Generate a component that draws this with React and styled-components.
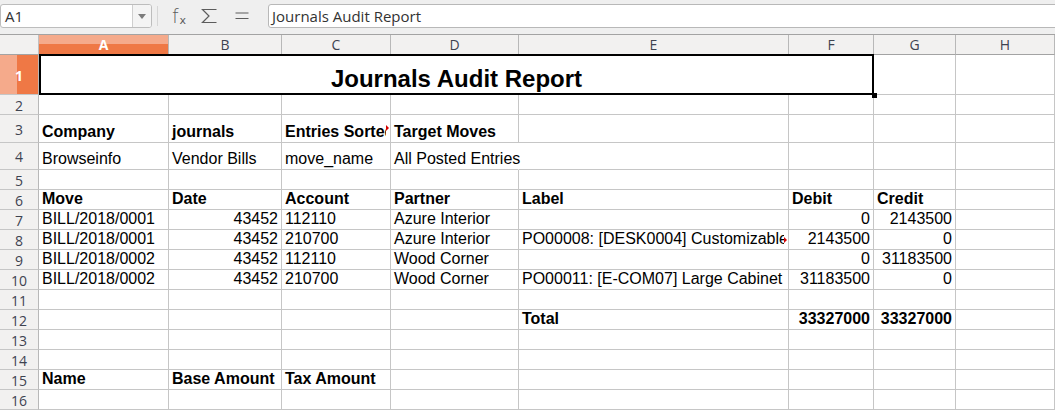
import React from 'react';
import styled, { createGlobalStyle } from 'styled-components';

const Global = createGlobalStyle`
  html, body { margin: 0; padding: 0; background: #ffffff; }
  body {
    width: 1055px; height: 411px; overflow: hidden;
    font-family: "Liberation Sans", Arial, sans-serif;
  }
`;

const COLS = [130, 113, 109, 128, 270, 85, 82, 99];
const LETTERS = ['A', 'B', 'C', 'D', 'E', 'F', 'G', 'H'];

const T = (v, o = {}) => ({ v, ...o });
const B = (v, o = {}) => ({ v, b: true, ...o });
const N = (v, o = {}) => ({ v, r: true, ...o });

const ROWS = [
  { h: 40, title: 'Journals Audit Report' },
  { h: 20, cells: [] },
  { h: 28, cells: [B('Company'), B('journals'), B('Entries Sorted By', { clip: true }), B('Target Moves')] },
  { h: 27, cells: [T('Browseinfo'), T('Vendor Bills'), T('move_name'), T('All Posted Entries', { noRight: true })] },
  { h: 20, cells: [] },
  { h: 20, cells: [B('Move'), B('Date'), B('Account'), B('Partner'), B('Label'), B('Debit'), B('Credit')] },
  { h: 20, cells: [T('BILL/2018/0001'), N('43452'), T('112110'), T('Azure Interior'), T(''), N('0'), N('2143500')] },
  { h: 20, cells: [T('BILL/2018/0001'), N('43452'), T('210700'), T('Azure Interior'), T('PO00008: [DESK0004] Customizable Desk (CONFIG)', { clip: true }), N('2143500'), N('0')] },
  { h: 20, cells: [T('BILL/2018/0002'), N('43452'), T('112110'), T('Wood Corner'), T(''), N('0'), N('31183500')] },
  { h: 20, cells: [T('BILL/2018/0002'), N('43452'), T('210700'), T('Wood Corner'), T('PO00011: [E-COM07] Large Cabinet'), N('31183500'), N('0')] },
  { h: 20, cells: [] },
  { h: 20, cells: [T(''), T(''), T(''), T(''), B('Total'), B('33327000', { r: true }), B('33327000', { r: true })] },
  { h: 20, cells: [] },
  { h: 20, cells: [] },
  { h: 20, cells: [B('Name'), B('Base Amount'), B('Tax Amount')] },
  { h: 20, cells: [] },
];

/* ---------- toolbar ---------- */
const Toolbar = styled.div`
  height: 34px;
  box-sizing: border-box;
  padding: 4px 0 6px 0;
  display: flex;
  align-items: stretch;
  background: #efefef;
  font-family: "Open Sans", "DejaVu Sans", sans-serif;
`;

const NameBox = styled.div`
  width: 152px;
  box-sizing: border-box;
  display: flex;
  border: 1px solid #bdbdbd;
  border-radius: 3px;
  background: #ffffff;
  overflow: hidden;
`;

const NameText = styled.div`
  flex: 1;
  display: flex;
  align-items: center;
  padding-left: 4px;
  font-size: 15px;
  color: #333333;
`;

const DropButton = styled.div`
  width: 18px;
  border-left: 1px solid #cfcfcf;
  background: #f4f4f4;
  display: flex;
  align-items: center;
  justify-content: center;
  &::after {
    content: '';
    border-left: 4px solid transparent;
    border-right: 4px solid transparent;
    border-top: 5px solid #7c7c7c;
  }
`;

const Separator = styled.div`
  width: 1px;
  margin: 2px 0 2px 5px;
  background: #d6d6d6;
`;

const IconSlot = styled.div`
  width: ${p => p.$w}px;
  margin-left: ${p => p.$ml}px;
  display: flex;
  align-items: center;
  justify-content: center;
  color: #5c5c5c;
`;

const FxF = styled.span`
  font-family: "DejaVu Sans", sans-serif;
  font-size: 19px;
  line-height: 1;
  color: #5c5c5c;
  font-weight: 300;
`;

const FxX = styled.span`
  font-family: "DejaVu Sans", sans-serif;
  font-size: 11px;
  line-height: 1;
  margin-top: 9px;
  margin-left: 1px;
  color: #5c5c5c;
`;

const FormulaInput = styled.div`
  flex: 1;
  margin-left: 16px;
  margin-right: -4px;
  box-sizing: border-box;
  border: 1px solid #b8b8b8;
  border-radius: 3px;
  background: #ffffff;
  display: flex;
  align-items: center;
  padding-left: 3px;
  font-size: 15px;
  color: #333333;
  white-space: nowrap;
`;

/* ---------- sheet ---------- */
const Sheet = styled.div`
  display: grid;
  grid-template-columns: ${p => p.$cols};
  grid-template-rows: ${p => p.$rows};
  border-top: 1px solid #a3a3a3;
  background: #ffffff;
`;

const HeadBase = styled.div`
  box-sizing: border-box;
  display: flex;
  align-items: center;
  justify-content: center;
  font-family: "Open Sans", "DejaVu Sans", sans-serif;
  font-size: 14px;
  color: ${p => (p.$sel ? '#ffffff' : '#3e4350')};
  font-weight: ${p => (p.$sel ? 700 : 400)};
`;

const Corner = styled(HeadBase)`
  background: #f2f1f0;
  border-right: 1px solid #c0c0c0;
  border-bottom: 1px solid #a3a3a3;
`;

const ColHead = styled(HeadBase)`
  background: ${p => (p.$sel ? 'linear-gradient(to bottom, #f5aa8b 0 9px, #ef7845 9px)' : '#f2f1f0')};
  border-right: 1px solid #b8b8b8;
  border-bottom: 1px solid #a3a3a3;
`;

const RowHead = styled(HeadBase)`
  background: ${p => (p.$sel ? 'linear-gradient(to right, #f5aa8b 0 17px, #ef7845 17px)' : '#f2f1f0')};
  border-right: 1px solid #b8b8b8;
  border-bottom: 1px solid #c6c6c6;
  padding-top: 1px;
`;

const Cell = styled.div`
  position: relative;
  box-sizing: border-box;
  min-width: 0;
  border-right: 1px solid ${p => (p.$noRight ? 'transparent' : '#c6c6c6')};
  border-bottom: 1px solid #c6c6c6;
  display: flex;
  align-items: flex-end;
  justify-content: ${p => (p.$right ? 'flex-end' : 'flex-start')};
  padding: 0 ${p => (p.$right ? 3 : 2)}px 1px 3px;
  font-size: 16px;
  line-height: 18px;
  font-weight: ${p => (p.$bold ? 700 : 400)};
  color: #000000;
  white-space: nowrap;
`;

const TitleCell = styled(Cell)`
  grid-column: span 6;
  justify-content: center;
  font-size: 24px;
  line-height: 28px;
  font-weight: 700;
  &::after {
    content: '';
    position: absolute;
    top: -1px;
    left: 0;
    right: -1px;
    bottom: -1px;
    border: 2px solid #000000;
    pointer-events: none;
    z-index: 2;
  }
`;

const Handle = styled.span`
  position: absolute;
  right: -4px;
  bottom: -4px;
  width: 5px;
  height: 5px;
  background: #000000;
  z-index: 3;
`;

const Clip = styled.span`
  display: block;
  flex: 1;
  min-width: 0;
  overflow: hidden;
  margin-right: 2px;
`;

const OverflowMark = styled.span`
  position: absolute;
  right: 1px;
  bottom: ${p => p.$b}px;
  width: 0;
  height: 0;
  border-top: 3px solid transparent;
  border-bottom: 3px solid transparent;
  border-left: 3px solid #d40000;
`;

function SigmaIcon() {
  return (
    <svg width="17" height="16" viewBox="0 0 17 16" fill="none" stroke="#5c5c5c" strokeWidth="1.2">
      <path d="M15.5 1.5 H1.5 L8 8 L1.5 14.5 H15.5" />
    </svg>
  );
}

function EqualsIcon() {
  return (
    <svg width="14" height="8" viewBox="0 0 14 8" fill="none" stroke="#5c5c5c" strokeWidth="1.2">
      <path d="M0.5 1 H13.5 M0.5 6.5 H13.5" />
    </svg>
  );
}

function DataCell({ c }) {
  if (!c) return <Cell />;
  if (c.clip) {
    return (
      <Cell $bold={c.b} $right={c.r}>
        <Clip>{c.v}</Clip>
        <OverflowMark $b={c.b ? 11 : 6} />
      </Cell>
    );
  }
  return (
    <Cell $bold={c.b} $right={c.r} $noRight={c.noRight}>
      {c.v}
    </Cell>
  );
}

export default function App() {
  const cols = `39px ${COLS.map(w => `${w}px`).join(' ')}`;
  const rows = `20px ${ROWS.map(r => `${r.h}px`).join(' ')}`;
  return (
    <>
      <Global />
      <Toolbar>
        <NameBox>
          <NameText>A1</NameText>
          <DropButton />
        </NameBox>
        <Separator />
        <IconSlot $w={22} $ml={10}>
          <FxF>f</FxF>
          <FxX>x</FxX>
        </IconSlot>
        <IconSlot $w={20} $ml={9}>
          <SigmaIcon />
        </IconSlot>
        <IconSlot $w={20} $ml={13}>
          <EqualsIcon />
        </IconSlot>
        <FormulaInput>Journals Audit Report</FormulaInput>
      </Toolbar>
      <Sheet $cols={cols} $rows={rows}>
        <Corner />
        {LETTERS.map((l, i) => (
          <ColHead key={l} $sel={i === 0}>{l}</ColHead>
        ))}
        {ROWS.map((row, ri) => (
          <React.Fragment key={ri}>
            <RowHead $sel={ri === 0}>{ri + 1}</RowHead>
            {row.title ? (
              <>
                <TitleCell>
                  {row.title}
                  <Handle />
                </TitleCell>
                <Cell />
                <Cell />
              </>
            ) : (
              LETTERS.map((l, ci) => <DataCell key={l} c={row.cells[ci]} />)
            )}
          </React.Fragment>
        ))}
      </Sheet>
    </>
  );
}
